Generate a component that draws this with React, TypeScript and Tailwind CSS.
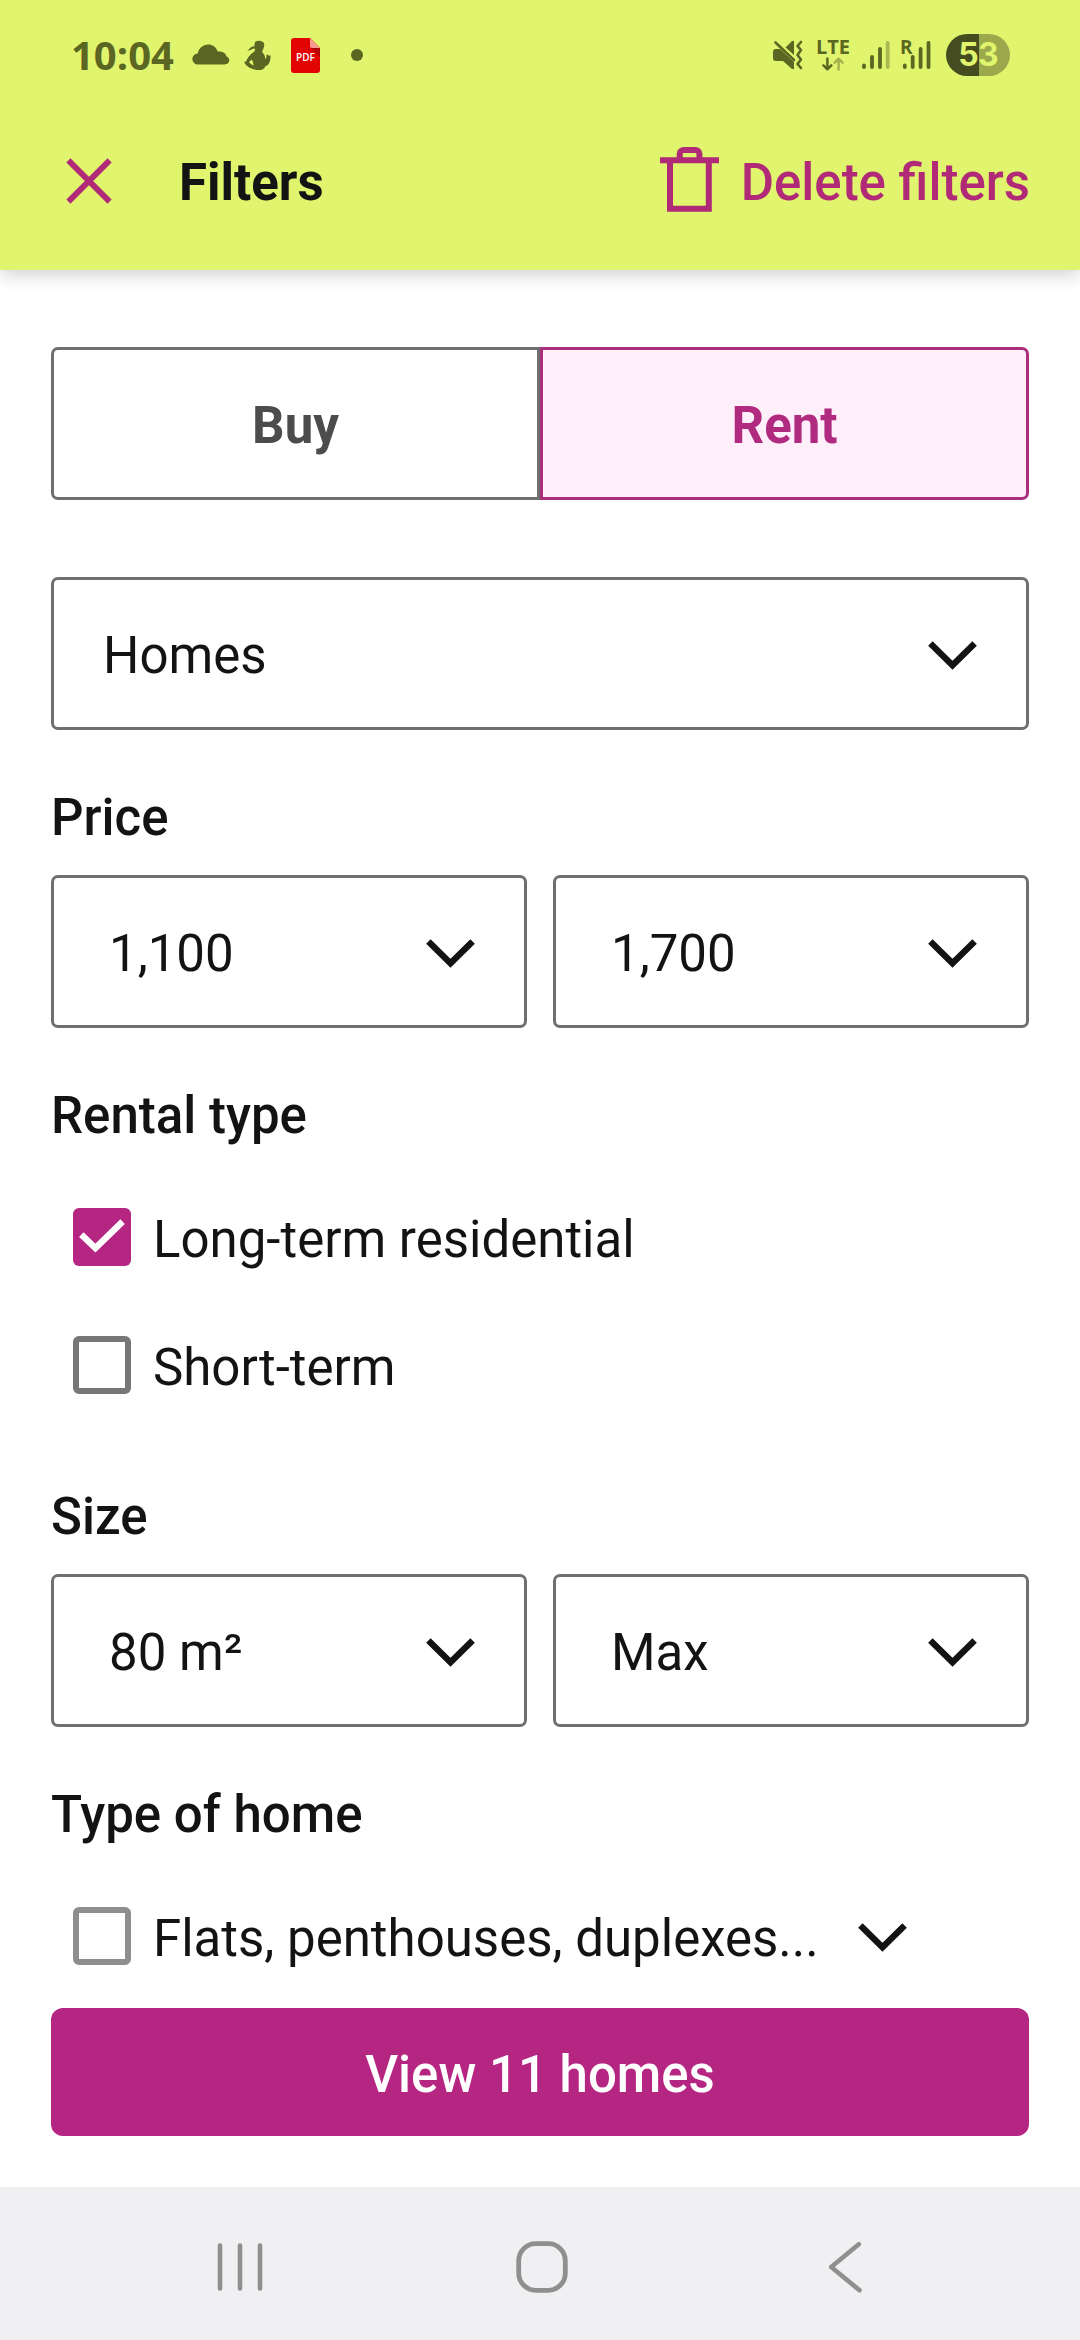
import { useState } from 'react';

const CloseIcon = ({ className = '' }) => (
  <svg viewBox="0 0 46 46" fill="none" stroke="currentColor" strokeWidth="5.8" className={className}>
    <path d="M2.4 2.4 43.6 43.6M43.6 2.4 2.4 43.6" />
  </svg>
);

const TrashIcon = ({ className = '' }) => (
  <svg viewBox="0 0 59 65" fill="none" stroke="currentColor" strokeWidth="6" className={className}>
    <path d="M0 13.2H59M10 13V61.8H48.8V13M19.7 13V7a4 4 0 0 1 4-4H35.4a4 4 0 0 1 4 4V13" />
  </svg>
);

const ChevronIcon = ({ className = '' }) => (
  <svg viewBox="0 0 49 29" fill="none" stroke="currentColor" strokeWidth="6.4" className={className}>
    <path d="M2.4 2.4 24.5 24.3 46.6 2.4" />
  </svg>
);

const CheckIcon = ({ className = '' }) => (
  <svg viewBox="0 0 58 58" fill="none" stroke="currentColor" strokeWidth="6.4" className={className}>
    <path d="M8.3 26.6 22.4 40 49.6 13.6" />
  </svg>
);

const StatusBar = () => (
  <div className="flex h-[110px] items-center justify-between pl-[71px] pr-[70px] text-[#5a6622]">
    <div className="flex items-center">
      <span className="w-[103px] whitespace-nowrap font-['Open_Sans'] text-[40px] leading-none font-bold">10:04</span>
      <svg viewBox="0 0 38 22" fill="currentColor" className="ml-[18px] h-[22px] w-[38px]">
        <path d="M6 20.5a5.5 5.5 0 0 1-.3-11C7 4 11 .5 16 .5c4.500 0 8 2.600 9.800 7C31 6.800 34 9.500 34.300 12.300 39 14 38 20.500 32.500 20.500Z" />
      </svg>
      <svg viewBox="0 0 27 30" fill="currentColor" className="ml-3.5 h-[30px] w-[27px]">
        <path d="M11 2c3-2 8-1.500 9 1.500.7 2-.3 5-1.500 7-.5 1-.2 2 .8 3C21 15 21 17 21.200 19c1.300-1 1.500-2.600 1.300-4l1-.8c.7 1 .8 1.300 1.300 1.200l1.800.2C26.500 21 25 26 21.500 26 20.500 28.500 18.500 30 16 30c-5 0-10-1-14-5l-2-3 2-.5C3.500 18 5.500 15 8.300 13c2-1.200 2.700-2 3-3.500L9.500 8.300C8 9.700 5 10.500 3 10.700c2-1 2.700-2.500 4-3.500 1-.8 2-.7 3.200-.7ZM5 22c1 1.700 3 2.800 4.500 3.500 0-2-.5-4-1.700-6Z" />
      </svg>
      <div className="relative ml-5 flex h-[35px] w-[29px] items-center justify-center">
        <svg viewBox="0 0 29 35" className="absolute inset-0 h-full w-full">
          <path fill="#e20303" d="M3 0H19L29 10V32a3 3 0 0 1-3 3H3a3 3 0 0 1-3-3V3A3 3 0 0 1 3 0Z" />
          <path fill="#b30606" d="M20 10H29V19Z" />
          <path fill="#f99a92" d="M19 0 29 10H21a2 2 0 0 1-2-2Z" />
        </svg>
        <span className="relative mt-1 font-['Open_Sans'] text-[10px] leading-none font-semibold text-white">PDF</span>
      </div>
      <span className="ml-[31px] h-3 w-3 rounded-full bg-current" />
    </div>
    <div className="flex items-center">
      <svg viewBox="0 0 30 30" className="h-[30px] w-[30px]">
        <path fill="currentColor" d="M3 9H7L21 22V29H19L10 21H3Q0 21 0 18V12Q0 9 3 9ZM12.500 7.500 19 1Q21 0 21 2V15Z" />
        <path fill="none" stroke="currentColor" strokeWidth="2.6" strokeLinecap="round" strokeLinejoin="round" d="M2.500 2.500 21 20M28 2 24.500 6 28 10 24.500 15 28 19.500 24.500 24 28 28" />
      </svg>
      <div className="ml-[13px] flex h-8 w-[34px] flex-col items-center">
        <span className="font-['Open_Sans'] text-[20px] leading-[15px] font-bold">LTE</span>
        <svg viewBox="0 0 24 15" fill="none" stroke="currentColor" strokeWidth="2.6" strokeLinecap="round" strokeLinejoin="round" className="mt-[3px] h-[15px] w-6">
          <path d="M6 1.500V13M1.800 9 6 13.200 10.200 9" />
          <path className="text-[#a3b14d]" stroke="currentColor" d="M18 13.500V2M13.800 6 18 1.800 22.200 6" />
        </svg>
      </div>
      <svg viewBox="0 0 28 30" stroke="currentColor" strokeWidth="3.8" strokeLinecap="round" className="ml-3 h-[30px] w-7">
        <path d="M2 25.500V27M10 17V27M18 9V27" />
        <path className="text-[#a9b951]" stroke="currentColor" d="M25.700 3V27" />
      </svg>
      <div className="relative ml-[10px] h-[30px] w-[31px]">
        <svg viewBox="0 0 31 30" stroke="currentColor" strokeWidth="3.8" strokeLinecap="round" className="h-full w-full">
          <path d="M4.800 25.500V27M12.700 17V27M20.600 9V27M28.500 3V27" />
        </svg>
        <span className="absolute top-0 left-0 font-['Open_Sans'] text-[19px] leading-[14px] font-bold">R</span>
      </div>
      <div className="ml-[15px] flex h-[42px] w-16 items-center justify-center overflow-hidden rounded-full bg-linear-to-r from-[#454c1f] from-52% to-[#9ba84b] to-52%">
        <span className="font-['Inter'] text-[32px] leading-none font-bold tracking-tight text-[#e0f46e]">53</span>
      </div>
    </div>
  </div>
);

const SelectBox = ({ value, className = 'pl-[55px]' }: { value: string; className?: string }) => (
  <button className={`flex h-[153px] flex-1 items-center justify-between rounded-[7px] border-[3px] border-[#6f6f6f] pr-[49px] ${className}`}>
    <span className="pt-1">{value}</span>
    <ChevronIcon className="mt-[3px] h-[29px] w-[49px]" />
  </button>
);

const SectionTitle = ({ children }: { children: string }) => (
  <h2 className="flex h-[145px] items-center pt-[30px] font-medium">{children}</h2>
);

type CheckRowProps = {
  label: string;
  checked: boolean;
  onChange: () => void;
  expandable?: boolean;
};

const CheckRow = ({ label, checked, onChange, expandable }: CheckRowProps) => (
  <div className="flex h-32 items-center pl-[22px]">
    <button onClick={onChange} className="flex items-center">
      {checked ? (
        <span className="h-[58px] w-[58px] rounded-md bg-[#b52682] text-white">
          <CheckIcon className="h-full w-full" />
        </span>
      ) : (
        <span className={`h-[58px] w-[58px] rounded-md border-[6px] ${expandable ? 'border-[#8e8e8d]' : 'border-[#777777]'}`} />
      )}
      <span className="ml-[22px] pt-1.5">{label}</span>
    </button>
    {expandable && <ChevronIcon className="mt-[3px] ml-[39px] h-[29px] w-[49px]" />}
  </div>
);

const NavigationBar = () => (
  <div className="flex h-[153px] items-center bg-[#f0f0f2] pt-[7px] pl-[217px] text-[#8f8f8f]">
    <svg viewBox="0 0 46 50" stroke="currentColor" strokeWidth="4.6" strokeLinecap="round" className="h-[50px] w-[46px]">
      <path d="M3 3.500V46.500M23 3.500V46.500M43 3.500V46.500" />
    </svg>
    <svg viewBox="0 0 52 52" fill="none" stroke="currentColor" strokeWidth="4.8" className="ml-[253px] h-[52px] w-[52px]">
      <rect x="2.7" y="2.7" width="46.6" height="46.6" rx="17" />
    </svg>
    <svg viewBox="0 0 34 52" fill="none" stroke="currentColor" strokeWidth="4.6" strokeLinecap="round" strokeLinejoin="round" className="ml-[260px] h-[52px] w-[34px]">
      <path d="M30.800 3.200 3.200 26 31.500 49.200" />
    </svg>
  </div>
);

const App = () => {
  const [mode, setMode] = useState('rent');
  const [longTerm, setLongTerm] = useState(true);
  const [shortTerm, setShortTerm] = useState(false);
  const [flats, setFlats] = useState(false);

  const tabStyle = (active: boolean) =>
    active ? 'border-[#a92f7c] bg-[#ffeffa] text-[#b02a80]' : 'border-[#6f6f6f] text-[#4c4c4c]';

  return (
    <div className="flex h-[2340px] w-[1080px] flex-col overflow-hidden bg-white font-['Roboto',sans-serif] text-[51px] leading-[60px] text-[#131313]">
      <header className="h-[270px] bg-[#e0f46e] shadow-[0_4px_18px_rgba(0,0,0,0.2)]">
        <StatusBar />
        <div className="flex h-[142px] items-center pr-[50px] pl-[66px]">
          <CloseIcon className="h-[46px] w-[46px] text-[#b02a78]" />
          <h1 className="ml-[67px] pt-[3px] font-bold">Filters</h1>
          <button className="ml-auto flex items-center text-[#b02a78]">
            <TrashIcon className="mb-[3px] h-[65px] w-[59px]" />
            <span className="ml-[22px] pt-[3px] font-medium">Delete filters</span>
          </button>
        </div>
      </header>

      <main className="flex-1 px-[51px] pt-[77px]">
        <div className="mb-[77px] flex h-[153px] font-bold">
          <button
            onClick={() => setMode('buy')}
            className={`flex-1 rounded-l-[7px] border-[3px] pt-1 ${tabStyle(mode === 'buy')}`}
          >
            Buy
          </button>
          <button
            onClick={() => setMode('rent')}
            className={`flex-1 rounded-r-[7px] border-[3px] pt-1 ${tabStyle(mode === 'rent')}`}
          >
            Rent
          </button>
        </div>

        <div className="flex">
          <SelectBox value="Homes" className="pl-[49px]" />
        </div>

        <SectionTitle>Price</SectionTitle>
        <div className="flex gap-[26px]">
          <SelectBox value="1,100" />
          <SelectBox value="1,700" />
        </div>

        <SectionTitle>Rental type</SectionTitle>
        <CheckRow label="Long-term residential" checked={longTerm} onChange={() => setLongTerm(!longTerm)} />
        <CheckRow label="Short-term" checked={shortTerm} onChange={() => setShortTerm(!shortTerm)} />

        <SectionTitle>Size</SectionTitle>
        <div className="flex gap-[26px]">
          <SelectBox value="80 m²" />
          <SelectBox value="Max" />
        </div>

        <SectionTitle>Type of home</SectionTitle>
        <CheckRow
          label="Flats, penthouses, duplexes..."
          checked={flats}
          onChange={() => setFlats(!flats)}
          expandable
        />
      </main>

      <footer className="h-[179px] px-[51px]">
        <button className="h-32 w-full rounded-xl bg-[#b52682] pt-1.5 font-medium text-white">View 11 homes</button>
      </footer>
      <NavigationBar />
    </div>
  );
};

export default App;
